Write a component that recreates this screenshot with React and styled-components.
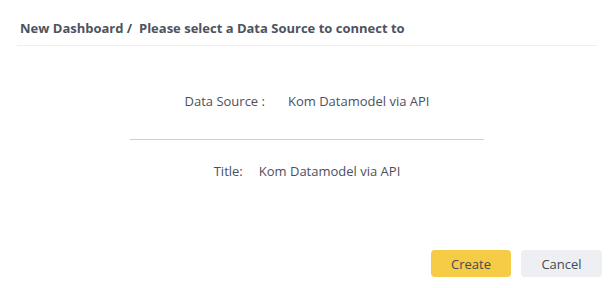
import React from 'react';
import styled, {createGlobalStyle} from 'styled-components';

const GlobalStyle = createGlobalStyle`
  body {
    margin: 0;
    background: #ffffff;
    font-family: "Open Sans", "Noto Sans", sans-serif;
    color: #4b5060;
  }
`;

export default function App() {
  return (
    <>
      <GlobalStyle />
      <Page>
        <Header>New Dashboard /&nbsp; Please select a Data Source to connect to</Header>
        <Body>
          <Row $top={45} $gap={23}>
            <Label>Data Source :</Label>
            <Value>Kom Datamodel via API</Value>
          </Row>
          <Divider />
          <Row $top={21} $gap={16}>
            <Label>Title:</Label>
            <Value>Kom Datamodel via API</Value>
          </Row>
        </Body>
        <Actions>
          <Button $primary>Create</Button>
          <Button>Cancel</Button>
        </Actions>
      </Page>
    </>
  );
}

const Page = styled.div`
  width: 614px;
  height: 288px;
  box-sizing: border-box;
  padding: 0 12px;
  display: flex;
  flex-direction: column;
`;

const Header = styled.div`
  height: 46px;
  box-sizing: border-box;
  padding: 19px 0 0 3px;
  border-bottom: 1px solid #efefef;
  margin: 0 5px;
  font-size: 13px;
  font-weight: 700;
  color: #4e5261;
  white-space: nowrap;
`;

const Body = styled.div`
  display: flex;
  flex-direction: column;
  align-items: center;
  flex: 1;
`;

const Row = styled.div`
  display: flex;
  gap: ${p => p.$gap}px;
  margin-top: ${p => p.$top}px;
  font-size: 13px;
  line-height: 20px;
  color: #4b5060;
`;

const Label = styled.span``;

const Value = styled.span``;

const Divider = styled.div`
  width: 354px;
  height: 1px;
  background: #cfcfcf;
  margin-top: 28px;
`;

const Actions = styled.div`
  display: flex;
  justify-content: flex-end;
  gap: 10px;
  padding-bottom: 11px;
`;

const Button = styled.button`
  width: ${p => (p.$primary ? 80 : 81)}px;
  height: 27px;
  border: none;
  border-radius: 4px;
  background: ${p => (p.$primary ? '#f6cb45' : '#eeeff3')};
  color: #444955;
  font-family: "Open Sans", "Noto Sans", sans-serif;
  font-size: 13px;
  padding: 0;
  cursor: pointer;
`;
